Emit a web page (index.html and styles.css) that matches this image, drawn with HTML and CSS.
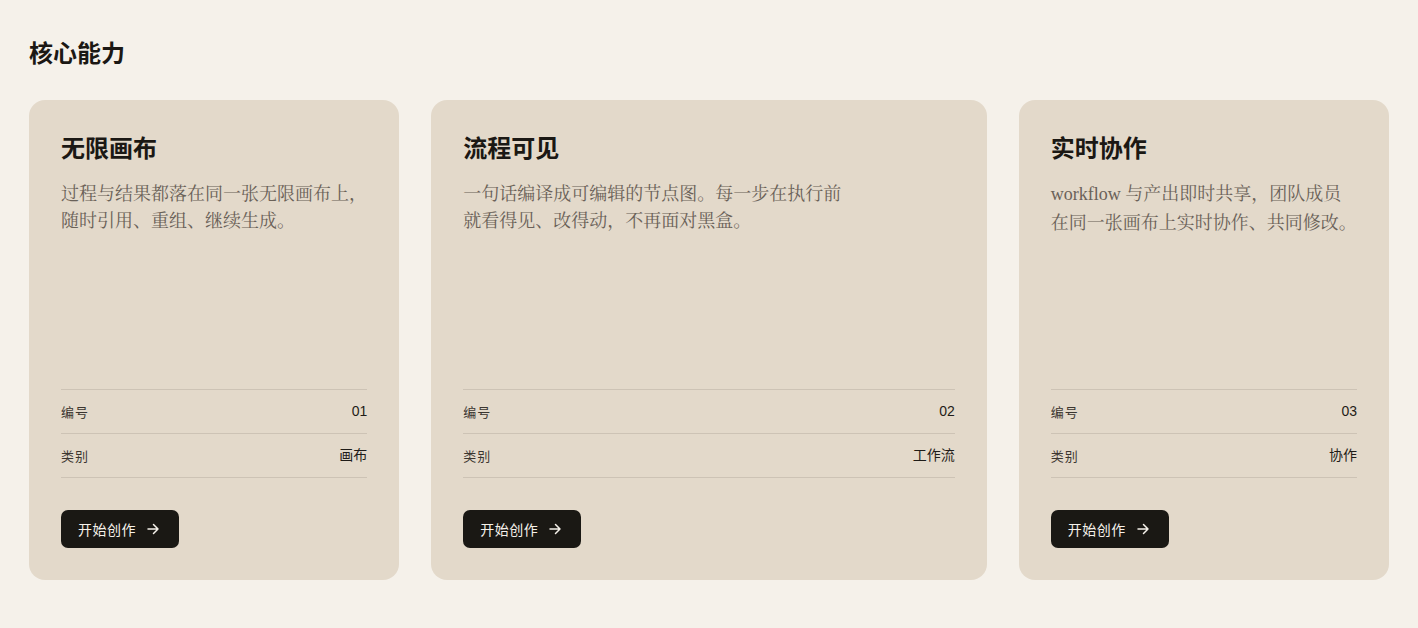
FILE: index.html
```html
<!DOCTYPE html>
<html lang="zh-CN">
<head>
<meta charset="utf-8">
<title>核心能力</title>
<link rel="stylesheet" href="styles.css">
</head>
<body>
<section class="section">
  <h2 class="section-title">核心能力</h2>
  <div class="grid">
    <article class="card">
      <h3 class="card-title">无限画布</h3>
      <p class="card-desc">过程与结果都落在同一张无限画布上，随时引用、重组、继续生成。</p>
      <dl class="meta">
        <div class="meta-row"><dt>编号</dt><dd>01</dd></div>
        <div class="meta-row"><dt>类别</dt><dd>画布</dd></div>
      </dl>
      <div class="actions">
        <button class="btn">开始创作<svg class="btn-icon" viewBox="0 0 16 16" width="16" height="16"><path d="M3 8h10M8.5 3.5L13 8l-4.5 4.5" fill="none" stroke="currentColor" stroke-width="1.5" stroke-linecap="round" stroke-linejoin="round"/></svg></button>
      </div>
    </article>
    <article class="card">
      <h3 class="card-title">流程可见</h3>
      <p class="card-desc">一句话编译成可编辑的节点图。每一步在执行前<br>就看得见、改得动，不再面对黑盒。</p>
      <dl class="meta">
        <div class="meta-row"><dt>编号</dt><dd>02</dd></div>
        <div class="meta-row"><dt>类别</dt><dd>工作流</dd></div>
      </dl>
      <div class="actions">
        <button class="btn">开始创作<svg class="btn-icon" viewBox="0 0 16 16" width="16" height="16"><path d="M3 8h10M8.5 3.5L13 8l-4.5 4.5" fill="none" stroke="currentColor" stroke-width="1.5" stroke-linecap="round" stroke-linejoin="round"/></svg></button>
      </div>
    </article>
    <article class="card">
      <h3 class="card-title">实时协作</h3>
      <p class="card-desc"><span class="latin">workflow</span> 与产出即时共享，团队成员<br>在同一张画布上实时协作、共同修改。</p>
      <dl class="meta">
        <div class="meta-row"><dt>编号</dt><dd>03</dd></div>
        <div class="meta-row"><dt>类别</dt><dd>协作</dd></div>
      </dl>
      <div class="actions">
        <button class="btn">开始创作<svg class="btn-icon" viewBox="0 0 16 16" width="16" height="16"><path d="M3 8h10M8.5 3.5L13 8l-4.5 4.5" fill="none" stroke="currentColor" stroke-width="1.5" stroke-linecap="round" stroke-linejoin="round"/></svg></button>
      </div>
    </article>
  </div>
</section>
</body>
</html>
```
FILE: styles.css
```css
* { box-sizing: border-box; }
html, body { margin: 0; padding: 0; }
body {
  background: #f5f1ea;
  color: #1b1814;
  font-family: "Noto Sans CJK SC", "Noto Sans", sans-serif;
}
.section {
  padding: 36px 29px 48px;
}
.section-title {
  margin: 0 0 32px;
  font-size: 24px;
  line-height: 32px;
  font-weight: 700;
  color: #1b1814;
}
.grid {
  display: grid;
  grid-template-columns: 1fr 1.5fr 1fr;
  gap: 32px;
}
.card {
  background: #e3d9ca;
  border-radius: 16px;
  padding: 32px;
  height: 480px;
  display: flex;
  flex-direction: column;
}
.card-title {
  margin: 0;
  font-size: 24px;
  line-height: 30px;
  font-weight: 700;
  color: #1b1814;
}
.card-desc {
  margin: 17px 0 0;
  font-family: "Noto Serif CJK SC", "Noto Serif SC", "Liberation Serif", serif;
  font-size: 18px;
  line-height: 27px;
  color: #6a6158;
}
.latin {
  font-family: "Liberation Serif", serif;
}
.meta {
  margin: auto 0 0;
  border-top: 1px solid #cdc3b5;
}
.meta-row {
  display: flex;
  justify-content: space-between;
  align-items: center;
  padding: 11px 0;
  line-height: 21px;
  border-bottom: 1px solid #cdc3b5;
}
.meta-row dt {
  font-size: 13px;
  letter-spacing: 1px;
  color: #3b3630;
}
.meta-row dd {
  margin: 0;
  font-family: "Liberation Sans", "Noto Sans CJK SC", sans-serif;
  font-size: 14px;
  color: #1f1c18;
}
.actions {
  margin-top: 32px;
}
.btn {
  display: inline-flex;
  align-items: center;
  gap: 9px;
  height: 38px;
  padding: 0 18px 0 17px;
  border: none;
  border-radius: 7px;
  background: #1a1814;
  color: #f5f1ea;
  font-family: "Noto Sans CJK SC", "Noto Sans", sans-serif;
  font-size: 14px;
  letter-spacing: 0.5px;
  cursor: pointer;
}
.btn-icon {
  display: block;
}
```
